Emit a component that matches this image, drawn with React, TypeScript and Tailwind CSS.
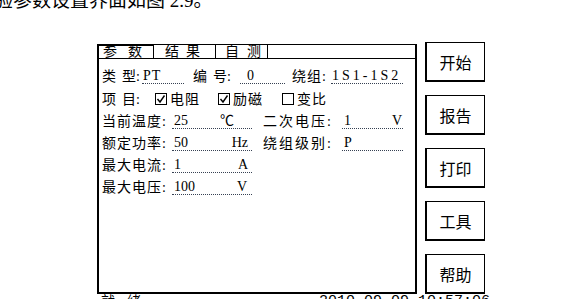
import type { ReactNode } from 'react';

function Spaced({ a, b, gap }: { a: string; b: string; gap: string }) {
    return (
        <>
            <span className={gap}>{a}</span>
            <span>{b}</span>
        </>
    );
}

interface ValProps {
    w: string;
    children?: ReactNode;
    unit?: string;
    pad?: string;
    unitPad?: string;
}

// 带虚线下划线的数值框
function Val({ w, children, unit, pad = 'pl-[2px]', unitPad = 'pr-[4px]' }: ValProps) {
    return (
        <div className={`${w} flex h-[15px] items-center justify-between border-b border-dotted border-gray-700 leading-[15px]`}>
            <span className={pad}>{children}</span>
            {unit && <span className={unitPad}>{unit}</span>}
        </div>
    );
}

function Check({ on, label, w }: { on: boolean; label: string; w: string }) {
    return (
        <div className={`${w} flex items-center`}>
            <svg width="12" height="12" viewBox="0 0 12 12" className="shrink-0">
                <rect x="0.5" y="0.5" width="11" height="11" fill="none" stroke="black" strokeWidth="1" />
                {on && <path d="M2.5 6 L5 9 L9.5 2.5" fill="none" stroke="black" strokeWidth="1.4" />}
            </svg>
            <span className="ml-[3px] tracking-[1px]">{label}</span>
        </div>
    );
}

const buttons = ['开始', '报告', '打印', '工具', '帮助'];

export default function App() {
    return (
        <div className="w-[564px] h-[299px] overflow-hidden bg-white text-black font-['Liberation_Serif','Noto_Sans_CJK_SC',serif]">
            {/* 文档正文（被截断的上一行） */}
            <div className="flex h-[42px]">
                <p className="-mt-[9px] -ml-[6px] whitespace-nowrap text-[19px] leading-[19px] font-['Liberation_Serif','Noto_Sans_CJK_SC',serif]">
                    验参数设置界面如图 2.9。
                </p>
            </div>

            <div className="flex items-start pl-[97px]">
                {/* 参数面板 */}
                <div className="mt-[2px] flex h-[250px] w-[320px] flex-col border-l-2 border-r-2 border-b-2 border-black text-[14px]">
                    <div className="flex h-[15px] border-b border-black leading-[12px]">
                        <div className="flex w-[55px] items-center border-t-2 border-r border-black pl-[4px]">
                            <Spaced a="参" b="数" gap="mr-[11px]" />
                        </div>
                        <div className="flex w-[62px] items-center border-t border-r border-black pl-[11px]">
                            <Spaced a="结" b="果" gap="mr-[7px]" />
                        </div>
                        <div className="flex w-[52px] items-center border-t border-r border-black pl-[9px]">
                            <Spaced a="自" b="测" gap="mr-[8px]" />
                        </div>
                        <div className="flex-1 border-t border-black" />
                    </div>

                    <div className="flex flex-col pt-[5px] pl-[3px]">
                        <div className="flex h-[24px] items-center">
                            <div className="w-[40px]"><Spaced a="类" b="型:" gap="mr-[6px]" /></div>
                            <Val w="w-[42px]" pad="pl-[1px] tracking-[1px]">PT</Val>
                            <div className="w-[9px]" />
                            <div className="w-[47px]"><Spaced a="编" b="号:" gap="mr-[6px]" /></div>
                            <Val w="w-[45px]" pad="pl-[7px]">0</Val>
                            <div className="w-[7px]" />
                            <div className="w-[39px] tracking-[1px]">绕组:</div>
                            <Val w="w-[72px]" pad="pl-[1px] tracking-[3px]">1S1-1S2</Val>
                        </div>

                        <div className="flex h-[22px] items-center">
                            <div className="w-[53px]"><Spaced a="项" b="目:" gap="mr-[6px]" /></div>
                            <Check on label="电阻" w="w-[63px]" />
                            <Check on label="励磁" w="w-[64px]" />
                            <Check on={false} label="变比" w="w-[60px]" />
                        </div>

                        <div className="flex h-[22px] items-center">
                            <div className="w-[70px] tracking-[1px]">当前温度:</div>
                            <Val w="w-[80px]" unit="℃" unitPad="pr-[18px]">25</Val>
                            <div className="w-[11px]" />
                            <div className="w-[79px] tracking-[2px]">二次电压:</div>
                            <Val w="w-[61px]" unit="V" unitPad="pr-[1px]">1</Val>
                        </div>

                        <div className="flex h-[22px] items-center">
                            <div className="w-[70px] tracking-[1px]">额定功率:</div>
                            <Val w="w-[80px]" unit="Hz">50</Val>
                            <div className="w-[11px]" />
                            <div className="w-[79px] tracking-[2px]">绕组级别:</div>
                            <Val w="w-[61px]">P</Val>
                        </div>

                        <div className="flex h-[22px] items-center">
                            <div className="w-[70px] tracking-[1px]">最大电流:</div>
                            <Val w="w-[80px]" unit="A">1</Val>
                        </div>

                        <div className="flex h-[22px] items-center">
                            <div className="w-[70px] tracking-[1px]">最大电压:</div>
                            <Val w="w-[80px]" unit="V" unitPad="pr-[5px]">100</Val>
                        </div>
                    </div>
                </div>

                {/* 右侧按钮 */}
                <div className="ml-[8px] flex flex-col gap-[13px]">
                    {buttons.map((b) => (
                        <div
                            key={b}
                            className="flex h-[40px] w-[60px] items-center justify-center border border-l-2 border-b-2 border-black bg-white text-[16px] font-['Noto_Sans_CJK_SC',sans-serif]"
                        >
                            {b}
                        </div>
                    ))}
                </div>
            </div>

            {/* 状态栏 */}
            <div className="ml-[97px] flex w-[393px] justify-between text-[14px] leading-[16px]">
                <span className="pl-[4px]">
                    <Spaced a="就" b="绪" gap="mr-[12px]" />
                </span>
                <span className="font-['Liberation_Mono',monospace] text-[15px]">2010-09-09 10:57:06</span>
            </div>
        </div>
    );
}
